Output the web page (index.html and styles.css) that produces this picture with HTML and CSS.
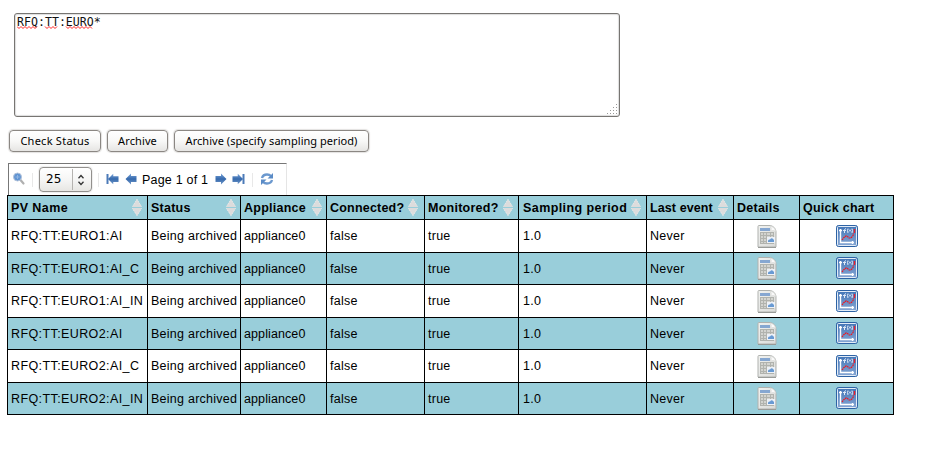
FILE: index.html
```html
<!DOCTYPE html>
<html lang="en"><head><meta charset="utf-8"><title>PV status</title><link rel="stylesheet" href="styles.css"></head>
<body>
<svg class="defs" aria-hidden="true">
<defs>
<linearGradient id="blue" x1="0" y1="0" x2="0" y2="1"><stop offset="0" stop-color="#4174b6"/><stop offset="1" stop-color="#88a8d4"/></linearGradient>
<linearGradient id="paper" x1="0" y1="0" x2="1" y2="1"><stop offset="0" stop-color="#f1f2f0"/><stop offset="1" stop-color="#d9dad8"/></linearGradient>
<linearGradient id="arrow" x1="0" y1="0" x2="0" y2="1"><stop offset="0" stop-color="#7ba5da"/><stop offset=".5" stop-color="#3569ac"/><stop offset="1" stop-color="#7299cb"/></linearGradient>
</defs>
<symbol id="sort" viewBox="0 0 10 17"><path d="M5 0 10 8H0zM0 9h10L5 17z" fill="#dcdcdc"/><path d="M5 .5.5 7.500M5 .5 9.500 7.500M.5 9.500 5 16.500 9.500 9.500" fill="none" stroke="#ececec" stroke-dasharray="1 1"/></symbol>
<symbol id="sheet" viewBox="0 0 20 23"><path d="M1 1.500q0-1 1-1h11.500q5 1.500 5.500 6v15.500H1z" fill="url(#paper)" stroke="#b0b2af"/><path d="M13.500 1q1.300 2.500.2 5 3-1 5.300.5-1-4.500-5.500-5.500" fill="#fafafa" stroke="#d0d1cf" stroke-width=".6"/><path d="M3 3h10v3H3z" fill="#86a7d1"/><path d="M3 7h14v12H3z" fill="#d3d4d0"/><path d="M3 7.500h14M3 10.500h14M3 13.500h7M3 16.500h7M3 18.500h14M3.500 7v12M6.500 7v12M9.500 7v12M13.500 7v5M16.500 7v12" fill="none" stroke="#b1b3ae"/><path d="M10 12h8v6h-8z" fill="#edf1f7"/><path d="M11 16q0-2 2-1.500 2-2.500 4 .5v2h-6z" fill="#689ad3"/><path d="M1 22.500h18" stroke="#999b98"/></symbol>
<symbol id="chart" viewBox="0 0 22 22"><rect x=".5" y=".5" width="21" height="21" rx="2" fill="url(#blue)" stroke="#2e63a5"/><rect x="1.500" y="1.500" width="19" height="19" rx="1" fill="none" stroke="#e3ecf7"/><path d="M4.500 4v13.500H18M3 5.500h3M16.500 16v3" fill="none" stroke="#fff" stroke-width="1.400"/><path d="M8.500 8V4.500L10 3.500M7 5.500h3M12 3.500l-.5 2 .5 2.500M13 4.500l2 2m0-2-2 2M16 3.500l.5 2-.5 2.500" fill="none" stroke="#dfe8f5"/><path d="M6 15l2-2.500 2-1.500 1.500.5 1.500 1.500h2l2-2.500.5-2" fill="none" stroke="#f3141c" stroke-width="1.200" stroke-dasharray="1.700 .6"/><path d="M18.500 4v4" stroke="#ec1f2b" stroke-width="1.400"/></symbol>
<symbol id="left" viewBox="0 0 12 12"><path d="M.5 6 6 .5V3h5.500v6H6v2.500z" fill="url(#arrow)"/></symbol>
</svg>
<textarea class="pvs" spellcheck="false">RFQ:TT:EURO*</textarea>
<svg class="squiggle" viewBox="0 0 80 3"><path d="M0 .5l2 2 2-2 2 2 2-2 2 2 2-2 2 2 2-2 2 2 2-2M28 .5l2 2 2-2 2 2 2-2 2 2 2-2M49 .5l2 2 2-2 2 2 2-2 2 2 2-2 2 2 2-2 2 2 2-2 2 2 2-2 2 2"/></svg>
<svg class="grip" viewBox="0 0 12 12"><path d="M10 1.500h1M7 4.500h1M10 4.500h1M4 7.500h1M7 7.500h1M10 7.500h1M1 10.500h1M4 10.500h1M7 10.500h1M10 10.500h1"/></svg>
<div class="buttons"><button class="b1">Check Status</button><button class="b2">Archive</button><button class="b3">Archive (specify sampling period)</button></div>
<div class="pager">
<svg class="search" viewBox="0 0 14 14"><path d="m8.500 8 3 3.500" stroke="#b0b0b0" stroke-width="2.200" stroke-linecap="round"/><circle cx="5.500" cy="5" r="4" fill="#6094d2" stroke="#b4c3da"/><path d="M3.500 5h4M5.500 3v4" stroke="#8fb4e2"/></svg>
<i class="sep s1"></i>
<div class="select"><span>25</span><svg viewBox="0 0 8 12"><path d="M1.500 4.200 4 1.500l2.500 2.700M1.500 7.800 4 10.500l2.500-2.700"/></svg></div>
<i class="sep s2"></i>
<svg class="first" viewBox="0 0 13 12"><path d="M.5 1h2v10h-2z" fill="#4c7bb8"/><use href="#left" x="1.500" width="11.500" height="12"/></svg>
<svg class="prev" viewBox="0 0 12 12"><use href="#left"/></svg>
<span class="page">Page 1 of 1</span>
<svg class="next" viewBox="0 0 12 12"><use href="#left"/></svg>
<svg class="last" viewBox="0 0 13 12"><path d="M.5 1h2v10h-2z" fill="#4c7bb8"/><use href="#left" x="1.500" width="11.500" height="12"/></svg>
<i class="sep s3"></i>
<svg class="refresh" viewBox="0 0 14 14"><path d="M2 6q1-3.500 5-3.500 2.500 0 4 1.500M12 8q-1 3.500-5 3.500-2.500 0-4-1.500" fill="none" stroke="#6b98ce" stroke-width="2.400"/><path d="M13 1v5.500H7.500zM1 13V7.500h5.500z" fill="#5a8bc6"/></svg>
</div>
<table>
<colgroup><col class="c1"><col class="c2"><col class="c3"><col class="c4"><col class="c5"><col class="c6"><col class="c7"><col class="c8"><col class="c9"></colgroup>
<thead><tr>
<th><div><span>PV Name</span><svg><use href="#sort"/></svg></div></th>
<th><div><span>Status</span><svg><use href="#sort"/></svg></div></th>
<th><div><span>Appliance</span><svg><use href="#sort"/></svg></div></th>
<th><div><span>Connected?</span><svg><use href="#sort"/></svg></div></th>
<th><div><span>Monitored?</span><svg><use href="#sort"/></svg></div></th>
<th><div><span>Sampling period</span><svg><use href="#sort"/></svg></div></th>
<th><div><span>Last event</span><svg><use href="#sort"/></svg></div></th>
<th><div><span>Details</span></div></th>
<th><div><span>Quick chart</span></div></th></tr></thead>
<tbody>
<tr><td>RFQ:TT:EURO1:AI</td><td>Being archived</td><td>appliance0</td><td>false</td><td>true</td><td>1.0</td><td>Never</td><td><svg class="sheet"><use href="#sheet"/></svg></td><td><svg class="chart"><use href="#chart"/></svg></td></tr>
<tr><td>RFQ:TT:EURO1:AI_C</td><td>Being archived</td><td>appliance0</td><td>false</td><td>true</td><td>1.0</td><td>Never</td><td><svg class="sheet"><use href="#sheet"/></svg></td><td><svg class="chart"><use href="#chart"/></svg></td></tr>
<tr><td>RFQ:TT:EURO1:AI_IN</td><td>Being archived</td><td>appliance0</td><td>false</td><td>true</td><td>1.0</td><td>Never</td><td><svg class="sheet"><use href="#sheet"/></svg></td><td><svg class="chart"><use href="#chart"/></svg></td></tr>
<tr><td>RFQ:TT:EURO2:AI</td><td>Being archived</td><td>appliance0</td><td>false</td><td>true</td><td>1.0</td><td>Never</td><td><svg class="sheet"><use href="#sheet"/></svg></td><td><svg class="chart"><use href="#chart"/></svg></td></tr>
<tr><td>RFQ:TT:EURO2:AI_C</td><td>Being archived</td><td>appliance0</td><td>false</td><td>true</td><td>1.0</td><td>Never</td><td><svg class="sheet"><use href="#sheet"/></svg></td><td><svg class="chart"><use href="#chart"/></svg></td></tr>
<tr><td>RFQ:TT:EURO2:AI_IN</td><td>Being archived</td><td>appliance0</td><td>false</td><td>true</td><td>1.0</td><td>Never</td><td><svg class="sheet"><use href="#sheet"/></svg></td><td><svg class="chart"><use href="#chart"/></svg></td></tr>
</tbody></table>
</body></html>
```
FILE: styles.css
```css
* { box-sizing: border-box; }
body { margin: 0; padding: 13px 0 0 7px; background: #fff; color: #000; font: 12.5px "Liberation Sans", Arial, sans-serif; overflow: hidden; }
svg { flex: none; display: block; }
.defs { position: absolute; width: 0; height: 0; }
.pvs { display: block; width: 606px; height: 104px; margin-left: 7px; padding: 1px 2px; border: 1px solid #777572; border-radius: 3px; box-shadow: inset 0 0 1px 1px #ddd; resize: none; outline: none; overflow: hidden; font: 11.6px/15px "DejaVu Sans Mono", monospace; color: #111; }
.squiggle { position: absolute; left: 17px; top: 26px; width: 80px; height: 3px; fill: none; stroke: #f22; }
.grip { position: absolute; left: 606px; top: 103px; width: 12px; height: 12px; stroke: #999; }
.buttons { display: flex; gap: 6px; margin: 13px 0 0 2px; }
button { height: 22px; padding: 0 0 2px; border: 1px solid #8b8783; border-radius: 4px; background: linear-gradient(#fff, #f8f8f7 50%, #e6e5e3); box-shadow: 0 0 1px 1px #e3e2e0; font: 11px "Noto Sans", sans-serif; color: #000; white-space: nowrap; }
.b1 { width: 92px; letter-spacing: .25px; } .b2 { width: 61px; letter-spacing: .1px; } .b3 { width: 195px; letter-spacing: .04px; }
.pager { width: 279px; height: 32px; margin: 11px 0 0 1px; border: 1px solid #777; border-right-color: #e5e5e5; border-bottom: 0; display: flex; align-items: center; padding-left: 3px; }
.pager > svg { position: relative; top: -1px; }
.search { width: 14px; height: 14px; }
.sep { width: 1px; height: 14px; background: #e8e8e8; }
.s1 { margin: 0 6px 0 6px; }
.select { width: 53px; height: 25px; border: 1px solid #92908d; border-radius: 4px; background: linear-gradient(#fff, #f6f6f5 50%, #e7e6e3); box-shadow: 0 0 1px 1px #eee; display: flex; align-items: center; font: 12px "DejaVu Sans", sans-serif; }
.select span { width: 33px; padding-left: 6px; line-height: 21px; border-right: 1px solid #b5b3b0; }
.select svg { width: 8px; height: 12px; margin-left: 4px; fill: none; stroke: #333; stroke-width: 1.300; }
.s2 { margin: 0 7px 0 6px; }
.first, .last { width: 13px; height: 12px; }
.prev, .next { width: 12px; height: 12px; }
.prev { margin-left: 6px; }
.page { width: 68px; margin: 0 5px; white-space: nowrap; letter-spacing: .2px; }
.next, .last { transform: scaleX(-1); }
.last { margin-left: 5px; }
.s3 { margin: 0 7px; }
.refresh { width: 14px; height: 14px; }
table { width: 887px; table-layout: fixed; border-collapse: separate; border-spacing: 0; border-top: 1px solid #000; border-left: 1px solid #000; }
.c1 { width: 140px; } .c2 { width: 93px; } .c3 { width: 86px; } .c4 { width: 98px; } .c5 { width: 94px; } .c6 { width: 128px; } .c7 { width: 87px; } .c8 { width: 66px; } .c9 { width: 94px; }
th, td { padding: 0 0 0 3px; border-right: 1px solid #000; border-bottom: 1px solid #000; text-align: left; white-space: nowrap; letter-spacing: .25px; }
th { height: 24px; background: #99ceda; }
th div { display: flex; align-items: center; justify-content: space-between; padding-right: 4px; }
th svg { width: 10px; height: 17px; }
th:nth-child(1), td:nth-child(1) { letter-spacing: .4px; }
td:nth-child(3) { letter-spacing: .1px; }
th:nth-child(3), th:nth-child(5) { letter-spacing: .25px; }
th:nth-child(4) { letter-spacing: .2px; }
th:nth-child(6) { letter-spacing: .42px; }
th:nth-child(7) { letter-spacing: .1px; }
th:nth-child(4) div { padding-right: 6px; }
th:nth-child(1) div, th:nth-child(5) div, th:nth-child(6) div, th:nth-child(7) div { padding-right: 5px; }
th:nth-child(6), td:nth-child(6) { padding-left: 4px; }
tbody tr:nth-child(odd) td { height: 33px; }
tbody tr:nth-child(even) td { height: 32px; background: #99ceda; }
.sheet { width: 20px; height: 23px; margin: 0 auto; }
.chart { width: 22px; height: 22px; margin: 0 auto; }
td:nth-child(8), td:nth-child(9) { padding: 0 0 1px; }
td:nth-child(8) { padding-bottom: 0; }
```
